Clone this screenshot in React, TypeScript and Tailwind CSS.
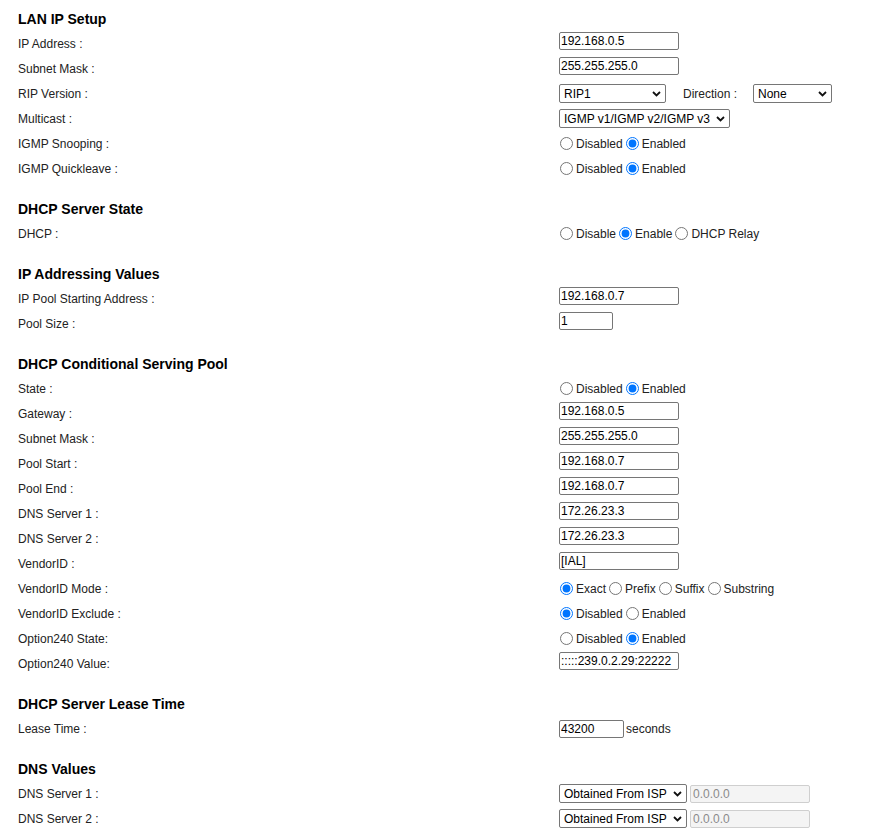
import React from 'react';

type RowProps = { label: string; children?: React.ReactNode };

function Row({ label, children }: RowProps) {
  return (
    <div className="flex h-[25px] items-center">
      <div className="w-[541px] shrink-0">{label}</div>
      <div className="flex items-center">{children}</div>
    </div>
  );
}

function Section({ title, first, children }: { title: string; first?: boolean; children: React.ReactNode }) {
  return (
    <div className={first ? '' : 'mt-[16px]'}>
      <div className="flex h-[24px] items-center text-[14px] font-bold text-black">{title}</div>
      {children}
    </div>
  );
}

// plain text box, sits a bit above the row centre like the original table layout
function TextBox({ value, w = 'w-[120px]', lifted = true }: { value: string; w?: string; lifted?: boolean }) {
  return (
    <input
      type="text"
      defaultValue={value}
      className={`h-[18px] ${w} rounded-[2px] border border-[#767676] bg-white px-[1px] text-[12px] text-black outline-none ${lifted ? 'mb-[6px]' : ''}`}
    />
  );
}

function Chevron() {
  return (
    <svg width="9" height="6" viewBox="0 0 9 6" className="pointer-events-none absolute right-[5px] top-1/2 -translate-y-1/2">
      <path d="M1 1 L4.5 4.5 L8 1" fill="none" stroke="#111" strokeWidth="1.8" />
    </svg>
  );
}

function Select({ options, w }: { options: string[]; w: string }) {
  return (
    <div className={`relative ${w}`}>
      <select className="h-[19px] w-full appearance-none rounded-[2px] border border-[#767676] bg-white pl-[4px] pr-[16px] text-[12px] text-black outline-none">
        {options.map((o) => (
          <option key={o}>{o}</option>
        ))}
      </select>
      <Chevron />
    </div>
  );
}

function Radios({ name, options, checked }: { name: string; options: string[]; checked: number }) {
  return (
    <div className="flex items-center gap-[3px] pl-[1px]">
      {options.map((o, i) => (
        <label key={o} className="flex items-center">
          <input
            type="radio"
            name={name}
            defaultChecked={i === checked}
            className="m-0 mr-[3px] h-[13px] w-[13px]"
          />
          <span>{o}</span>
        </label>
      ))}
    </div>
  );
}

export default function App() {
  const dis = ['Disabled', 'Enabled'];

  return (
    <div className="min-h-screen bg-white pl-[18px] pt-[7px] font-['Liberation_Sans',Arial,sans-serif] text-[12px] text-[#222]">
      {/* LAN IP Setup */}
      <Section title="LAN IP Setup" first>
        <Row label="IP Address :">
          <TextBox value="192.168.0.5" />
        </Row>
        <Row label="Subnet Mask :">
          <TextBox value="255.255.255.0" />
        </Row>
        <Row label="RIP Version :">
          <Select options={['RIP1', 'RIP2', 'Both']} w="w-[107px]" />
          <span className="ml-[17px] mr-[16px]">Direction :</span>
          <Select options={['None', 'In', 'Out', 'Both']} w="w-[79px]" />
        </Row>
        <Row label="Multicast :">
          <Select options={['IGMP v1/IGMP v2/IGMP v3']} w="w-[171px]" />
        </Row>
        <Row label="IGMP Snooping :">
          <Radios name="snoop" options={dis} checked={1} />
        </Row>
        <Row label="IGMP Quickleave :">
          <Radios name="quick" options={dis} checked={1} />
        </Row>
      </Section>

      {/* DHCP Server State */}
      <Section title="DHCP Server State">
        <Row label="DHCP :">
          <Radios name="dhcp" options={['Disable', 'Enable', 'DHCP Relay']} checked={1} />
        </Row>
      </Section>

      {/* IP Addressing Values */}
      <Section title="IP Addressing Values">
        <Row label="IP Pool Starting Address :">
          <TextBox value="192.168.0.7" />
        </Row>
        <Row label="Pool Size :">
          <TextBox value="1" w="w-[54px]" />
        </Row>
      </Section>

      {/* DHCP Conditional Serving Pool */}
      <Section title="DHCP Conditional Serving Pool">
        <Row label="State :">
          <Radios name="cstate" options={dis} checked={1} />
        </Row>
        <Row label="Gateway :">
          <TextBox value="192.168.0.5" />
        </Row>
        <Row label="Subnet Mask :">
          <TextBox value="255.255.255.0" />
        </Row>
        <Row label="Pool Start :">
          <TextBox value="192.168.0.7" />
        </Row>
        <Row label="Pool End :">
          <TextBox value="192.168.0.7" />
        </Row>
        <Row label="DNS Server 1 :">
          <TextBox value="172.26.23.3" />
        </Row>
        <Row label="DNS Server 2 :">
          <TextBox value="172.26.23.3" />
        </Row>
        <Row label="VendorID :">
          <TextBox value="[IAL]" />
        </Row>
        <Row label="VendorID Mode :">
          <Radios name="vmode" options={['Exact', 'Prefix', 'Suffix', 'Substring']} checked={0} />
        </Row>
        <Row label="VendorID Exclude :">
          <Radios name="vexcl" options={dis} checked={0} />
        </Row>
        <Row label="Option240 State:">
          <Radios name="o240" options={dis} checked={1} />
        </Row>
        <Row label="Option240 Value:">
          <TextBox value=":::::239.0.2.29:22222" />
        </Row>
      </Section>

      {/* DHCP Server Lease Time */}
      <Section title="DHCP Server Lease Time">
        <Row label="Lease Time :">
          <TextBox value="43200" w="w-[65px]" lifted={false} />
          <span className="ml-[2px]">seconds</span>
        </Row>
      </Section>

      {/* DNS Values */}
      <Section title="DNS Values">
        {['DNS Server 1 :', 'DNS Server 2 :'].map((l) => (
          <Row key={l} label={l}>
            <Select options={['Obtained From ISP', 'User Defined']} w="w-[128px]" />
            <input
              type="text"
              disabled
              defaultValue="0.0.0.0"
              className="ml-[3px] h-[18px] w-[120px] rounded-[2px] border border-[#cfcfcf] bg-[#f4f4f4] px-[2px] text-[12px] text-[#8a8a8a] outline-none"
            />
          </Row>
        ))}
      </Section>
    </div>
  );
}
